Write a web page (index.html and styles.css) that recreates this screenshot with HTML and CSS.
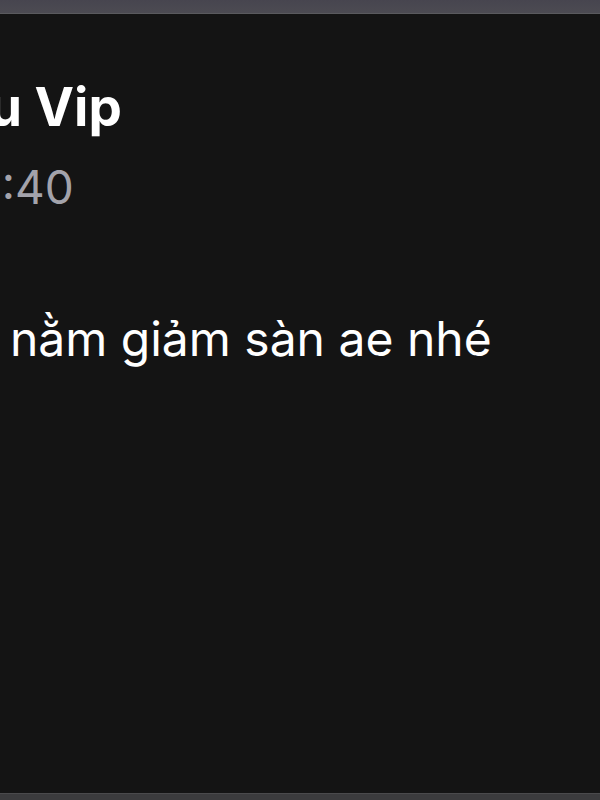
FILE: index.html
```html
<!DOCTYPE html>
<html lang="vi">
<head>
  <meta charset="UTF-8" />
  <meta name="viewport" content="width=device-width, initial-scale=1.0" />
  <title>Tin nhắn</title>
  <link rel="stylesheet" href="styles.css">
</head>
<body>
  <div class="window">
    <div class="titlebar"></div>
    <div class="chat">
      <div class="message">
        <div class="head">
          <div class="author">Lưu Vip</div>
          <div class="time">10:40</div>
        </div>
        <div class="text">Giá nằm giảm sàn ae nhé</div>
      </div>
    </div>
    <div class="statusbar"></div>
  </div>
</body>
</html>
```

FILE: styles.css
```css
* {
  box-sizing: border-box;
}
html, body {
  margin: 0;
  height: 100%;
  background: #141414;
  overflow: hidden;
}
.window {
  height: 100vh;
  display: flex;
  flex-direction: column;
  font-family: 'Inter', 'Noto Sans', sans-serif;
}
.titlebar {
  height: 14px;
  background: linear-gradient(#47454f, #4c4b52);
  border-bottom: 1px solid #5a5a5e;
}
.chat {
  flex: 1;
  background: #141414;
  overflow: hidden;
}
.message {
  padding-top: 61px;
}
.head .author {
  color: #ffffff;
  font-weight: 700;
  font-size: 53px;
  line-height: 64px;
  white-space: nowrap;
  text-indent: -76px;
}
.head .time {
  margin-top: 18px;
  color: #a3a3ab;
  font-size: 46px;
  line-height: 60px;
  white-space: nowrap;
  text-indent: -46px;
}
.text {
  margin-top: 92px;
  color: #ffffff;
  font-size: 48px;
  line-height: 60px;
  white-space: nowrap;
  text-indent: -78px;
}
.statusbar {
  height: 7px;
  background: #3b3b3d;
  border-top: 1px solid #4a4a4c;
}
```
